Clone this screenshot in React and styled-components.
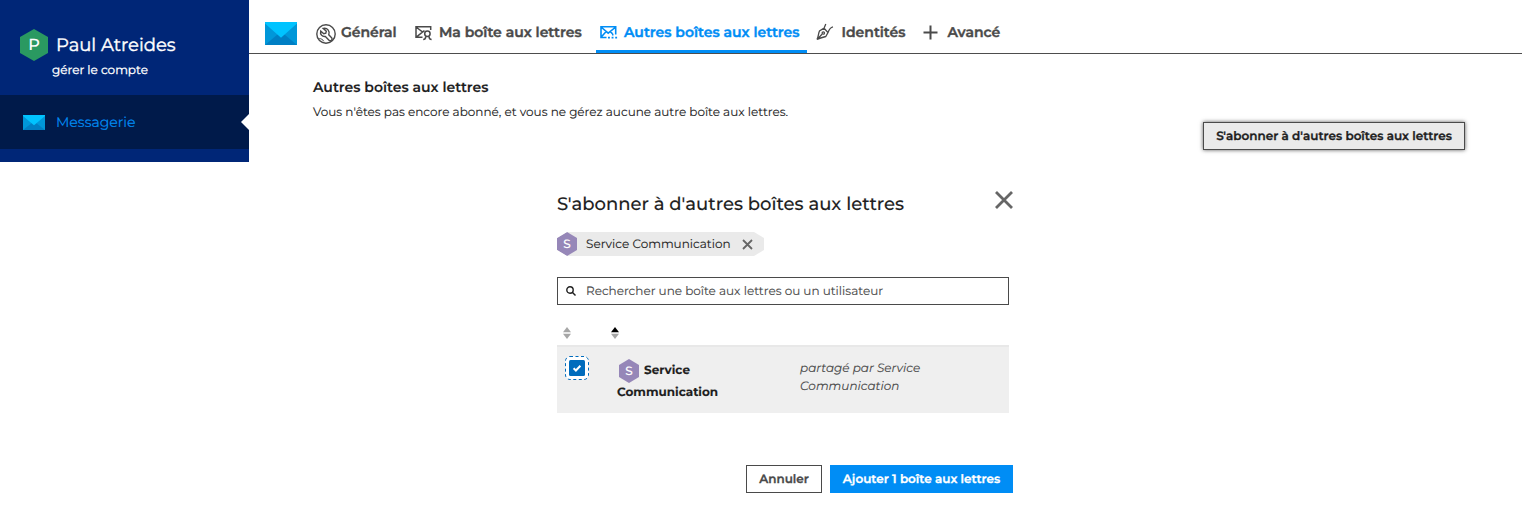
import React from "react";
import styled, { createGlobalStyle } from "styled-components";

const Global = createGlobalStyle`
  * { box-sizing: border-box; }
  body { margin: 0; background: #fff; color: #1f1f1f; font-family: Montserrat, Inter, sans-serif; font-size: 12px; -webkit-text-stroke: 0.12px currentColor; text-rendering: geometricPrecision; }
  h1, h2, p { margin: 0; }
  button { font-family: inherit; cursor: pointer; text-rendering: inherit; }
  svg { display: block; flex: none; }
`;

const Page = styled.div`display: flex; align-items: flex-start; height: 511px; overflow: hidden;`;
const Sidebar = styled.aside`width: 249px; height: 162px; flex: none; background: #002677; color: #fff;`;
const Account = styled.div`height: 95px; padding: 29px 0 0 20px;`;
const AccountRow = styled.div`display: flex; align-items: center; gap: 8px; height: 32px;`;
const Hexagon = styled.span`
  display: inline-flex; align-items: center; justify-content: center; flex: none; padding-top: 1px;
  width: ${(p) => p.$w}px; height: ${(p) => p.$h}px; background: ${(p) => p.$color}; color: #fff;
  font-size: ${(p) => p.$size}px; font-weight: 500; line-height: 1;
  clip-path: polygon(50% 0, 100% 25%, 100% 75%, 50% 100%, 0 75%, 0 25%);
`;
const Text = styled.span`white-space: nowrap;`;
const UserName = styled(Text)`font-size: 18px; font-weight: 400; line-height: 32px; -webkit-text-stroke-width: 0.4px;`;
const Manage = styled(Text)`display: block; padding: 2px 0 0 32px; font-size: 12px; font-weight: 400; line-height: 16px; -webkit-text-stroke-width: 0.3px;`;
const AppLink = styled.div`
  display: flex; align-items: center; gap: 11px; position: relative; height: 54px; padding-left: 23px;
  background: #001a4a; color: #008df5; font-size: 14px;
  &::after {
    content: ""; position: absolute; right: 0; top: 19px; width: 8px; height: 16px;
    background: #fff; clip-path: polygon(100% 0, 100% 100%, 0 50%);
  }
`;
const Main = styled.main`flex: 1; min-width: 0;`;
const TabBar = styled.nav`display: flex; height: 54px; padding: 0 0 0 16px; border-bottom: 1px solid #4d4d4d;`;
const Brand = styled.div`width: 47px; padding-top: 22px;`;
const Tab = styled.div`
  display: flex; align-items: center; width: ${(p) => p.$width}px; height: 53px; padding: 14px 0 0 4px;
  margin-right: ${(p) => p.$after || 0}px;
  color: ${(p) => (p.$active ? "#008df5" : "#4a4a4a")}; font-size: 14px; font-weight: 600;
  border-bottom: 3px solid ${(p) => (p.$active ? "#008df5" : "transparent")};
  -webkit-text-stroke-width: 0.4px;
`;
const TabIcon = styled.span`width: ${(p) => p.$width}px; flex: none; padding-top: ${(p) => p.$drop || 0}px;`;
const TabLabel = styled(Text)`line-height: 18px; margin-bottom: 1px;`;
const Section = styled.section`height: 138px; padding: 23px 57px 0 64px;`;
const SectionTitle = styled.h1`font-size: 14px; line-height: 20px; font-weight: 600; white-space: nowrap;`;
const Intro = styled.p`margin: 7px 0 0; font-size: 12px; line-height: 18px; white-space: nowrap;`;
const Actions = styled.div`display: flex; justify-content: flex-end;`;
const Button = styled.button`
  display: flex; align-items: center; justify-content: center; width: ${(p) => p.$width}px; height: 28px; padding: 0;
  border: 1px solid ${(p) => (p.$primary ? "#008df5" : "#4a4a4a")};
  background: ${(p) => (p.$primary ? "#008df5" : p.$raised ? "#eaeaea" : "#fff")};
  color: ${(p) => (p.$primary ? "#fff" : p.$raised ? "#1f1f1f" : "#4a4a4a")};
  box-shadow: ${(p) => (p.$raised ? "0 0 4px rgba(0,0,0,.65)" : "none")};
  font-size: 12px; font-weight: 600; -webkit-text-stroke: 0.3px currentColor;
`;
const Dialog = styled.div`width: 456px; margin-left: 308px;`;
const DialogHead = styled.header`display: flex; justify-content: space-between; height: 40px;`;
const CloseButton = styled.span`margin-top: -1px;`;
const DialogTitle = styled.h2`font-size: 18px; line-height: 24px; font-weight: 500; white-space: nowrap;`;
const Chip = styled.div`
  display: flex; align-items: center; width: 207px; height: 24px; background: #eaeaea;
  clip-path: polygon(10px 0, 197px 0, 100% 6px, 100% 18px, 197px 100%, 10px 100%, 0 18px, 0 6px);
`;
const ChipLabel = styled(Text)`width: 156px; margin-left: 9px;`;
const Search = styled.div`
  display: flex; align-items: center; gap: 10px; width: 452px; height: 28px; margin-top: 21px; padding-left: 8px;
  border: 1px solid #4a4a4a; color: #4a4a4a;
`;
const SortRow = styled.div`display: flex; gap: 40px; width: 452px; height: 40px; padding: 22px 0 0 6px;`;
const Result = styled.div`display: flex; width: 452px; height: 68px; background: #efefef; border-top: 2px solid #e8e8e8;`;
const CheckCell = styled.div`width: 60px; padding: 9px 0 0 8px;`;
const NameCell = styled.div`width: 183px; padding-top: 12px; font-weight: 700; line-height: 22px;`;
const NameLine = styled.div`display: flex; align-items: center; gap: 5px; height: 24px; padding-left: 2px;`;
const NameRest = styled(Text)`display: block; margin-top: -1px;`;
const SharedCell = styled.div`padding-top: 13px; color: #4a4a4a; font-style: italic; line-height: 18px;`;
const SharedLine = styled(Text)`display: block;`;
const Footer = styled.footer`display: flex; justify-content: flex-end; gap: 8px; margin-top: 52px;`;

const Mail = ({ w, h }) => (
  <svg width={w} height={h} viewBox="0 0 32 22" preserveAspectRatio="none">
    <path fill="#0097d9" d="M0 0h32v22H0z" />
    <path fill="#007fc4" d="M0 22 16 9l16 13z" />
    <path fill="#00c3ff" d="M0 0h32v1.500L16 15 0 1.500z" />
  </svg>
);
const Cross = ({ size, width, color = "#666" }) => (
  <svg width={size} height={size} viewBox={`0 0 ${size} ${size}`} stroke={color} strokeWidth={width}>
    <path d={`M1 1 ${size - 1} ${size - 1}M${size - 1} 1 1 ${size - 1}`} />
  </svg>
);
const line = { fill: "none", stroke: "currentColor", strokeWidth: 1.5 };
const GeneralIcon = () => (
  <svg width="20" height="20" viewBox="0 0 20 20" {...line} strokeWidth="1.400">
    <circle cx="10" cy="10" r="9.200" />
    <path d="M7.200 4.400 10.300 7.200 9.800 9.200 7.800 9.700 4.700 7.100C3.900 10.200 6 13 9.400 12.500L13 16.200C14.500 17.700 17.200 15.600 15.600 13.800L12.800 10.800C14.200 7.200 11.300 3.400 7.200 4.400Z" />
    <path d="M3.300 14.500c2 .2 3.500 1 4.500 2.800" strokeWidth="1" />
  </svg>
);
const MailboxIcon = () => (
  <svg width="18" height="16" viewBox="0 0 18 16" {...line}>
    <path d="M7.500 12.300H1V1.800h14.700V5M1 2l6.500 5L1 12.300M7.500 7l2-1.300" />
    <circle cx="12.400" cy="8.700" r="2.700" />
    <path d="M8.200 14.600c1.400 0 2.400-1 2.700-3.200M13.900 11.400c.3 2.200 1.300 3.200 2.700 3.200" />
  </svg>
);
const SharedMailboxIcon = () => (
  <svg width="18" height="15" viewBox="0 0 18 15" {...line} strokeWidth="1.600">
    <path d="M6.500 12.500H1V1.800h14.700V9.500M1 2l7.200 6.200L15.700 2M1 12.300l5.200-5.800M10.400 6.700l2.200 2.200" />
    <path d="M8 12.700h1.900M11.600 12.700h1.900M15.200 12.700h1.900M12 9.700h1.500" strokeWidth="1.800" />
  </svg>
);
const PenIcon = () => (
  <svg width="18" height="18" viewBox="0 0 18 18" {...line} strokeWidth="1.300">
    <path d="M1 16.500C2.500 13.500 2.300 10.500 3.500 8L8 5.200 12 9.500 9.800 13.500C6.500 14.300 3.700 15 1 16.500L6 11.200M8 5.200 9.800 1M12 9.500C13.200 6 14.500 4.300 17 3.800" />
    <circle cx="7.300" cy="10" r="1.200" />
  </svg>
);
const PlusIcon = () => (
  <svg width="15" height="15" viewBox="0 0 15 15" {...line} strokeWidth="2"><path d="M7.500 .5v14M.5 7.500h14" /></svg>
);
const SearchIcon = () => (
  <svg width="10" height="10" viewBox="0 0 10 10" fill="none" stroke="#1f1f1f" strokeWidth="1.400">
    <circle cx="4" cy="4" r="3.200" /><path d="m6.300 6.300 3.200 3.200" />
  </svg>
);
const Sort = ({ up }) => (
  <svg width="8" height="12" viewBox="0 0 8 12">
    <path fill={up ? "#000" : "#a6a6a6"} d="M4 0 8 5.300H0z" /><path fill="#a6a6a6" d="M0 6.700h8L4 12z" />
  </svg>
);
const Checkbox = () => (
  <svg width="24" height="24" viewBox="0 0 24 24">
    <rect x=".5" y=".5" width="23" height="23" rx="4.500" fill="#fff" stroke="#006cbd" strokeDasharray="3 2.500" />
    <rect x="4" y="4" width="16" height="16" rx="1.500" fill="#006cbd" />
    <path d="m8.600 12.300 2.300 2.200 4.500-4.700" fill="none" stroke="#fff" strokeWidth="2" />
  </svg>
);

const tabs = [
  { label: "Général", icon: GeneralIcon, width: 99, iconWidth: 25, drop: 3 },
  { label: "Ma boîte aux lettres", icon: MailboxIcon, width: 185, iconWidth: 24, drop: 2 },
  { label: "Autres boîtes aux lettres", icon: SharedMailboxIcon, width: 211, iconWidth: 24, active: true, after: 5 },
  { label: "Identités", icon: PenIcon, width: 107, iconWidth: 25.5 },
  { label: "Avancé", icon: PlusIcon, width: 90, iconWidth: 24.5 },
];

export default function App() {
  return (
    <Page>
      <Global />
      <Sidebar>
        <Account>
          <AccountRow>
            <Hexagon $w={28} $h={32} $color="#2a9961" $size={16}>P</Hexagon>
            <UserName>Paul Atreides</UserName>
          </AccountRow>
          <Manage>gérer le compte</Manage>
        </Account>
        <AppLink><Mail w={22} h={15} /><Text>Messagerie</Text></AppLink>
      </Sidebar>
      <Main>
        <TabBar>
          <Brand><Mail w={32} h={23} /></Brand>
          {tabs.map(({ label, icon: Icon, width, iconWidth, active, after, drop }) => (
            <Tab key={label} $width={width} $active={active} $after={after}>
              <TabIcon $width={iconWidth} $drop={drop}><Icon /></TabIcon>
              <TabLabel>{label}</TabLabel>
            </Tab>
          ))}
        </TabBar>
        <Section>
          <SectionTitle>Autres boîtes aux lettres</SectionTitle>
          <Intro>Vous n'êtes pas encore abonné, et vous ne gérez aucune autre boîte aux lettres.</Intro>
          <Actions>
            <Button $width={262} $raised><Text>S'abonner à d'autres boîtes aux lettres</Text></Button>
          </Actions>
        </Section>
        <Dialog>
          <DialogHead>
            <DialogTitle>S'abonner à d'autres boîtes aux lettres</DialogTitle>
            <CloseButton><Cross size={18} width={2.8} /></CloseButton>
          </DialogHead>
          <Chip>
            <Hexagon $w={20} $h={24} $color="#9687b8" $size={12}>S</Hexagon>
            <ChipLabel>Service Communication</ChipLabel>
            <Cross size={11} width={1.8} />
          </Chip>
          <Search><SearchIcon /><Text>Rechercher une boîte aux lettres ou un utilisateur</Text></Search>
          <SortRow><Sort /><Sort up /></SortRow>
          <Result>
            <CheckCell><Checkbox /></CheckCell>
            <NameCell>
              <NameLine><Hexagon $w={20} $h={24} $color="#9687b8" $size={12}>S</Hexagon><Text>Service</Text></NameLine>
              <NameRest>Communication</NameRest>
            </NameCell>
            <SharedCell>
              <SharedLine>partagé par Service</SharedLine>
              <SharedLine>Communication</SharedLine>
            </SharedCell>
          </Result>
          <Footer>
            <Button $width={76}><Text>Annuler</Text></Button>
            <Button $width={183} $primary><Text>Ajouter 1 boîte aux lettres</Text></Button>
          </Footer>
        </Dialog>
      </Main>
    </Page>
  );
}
